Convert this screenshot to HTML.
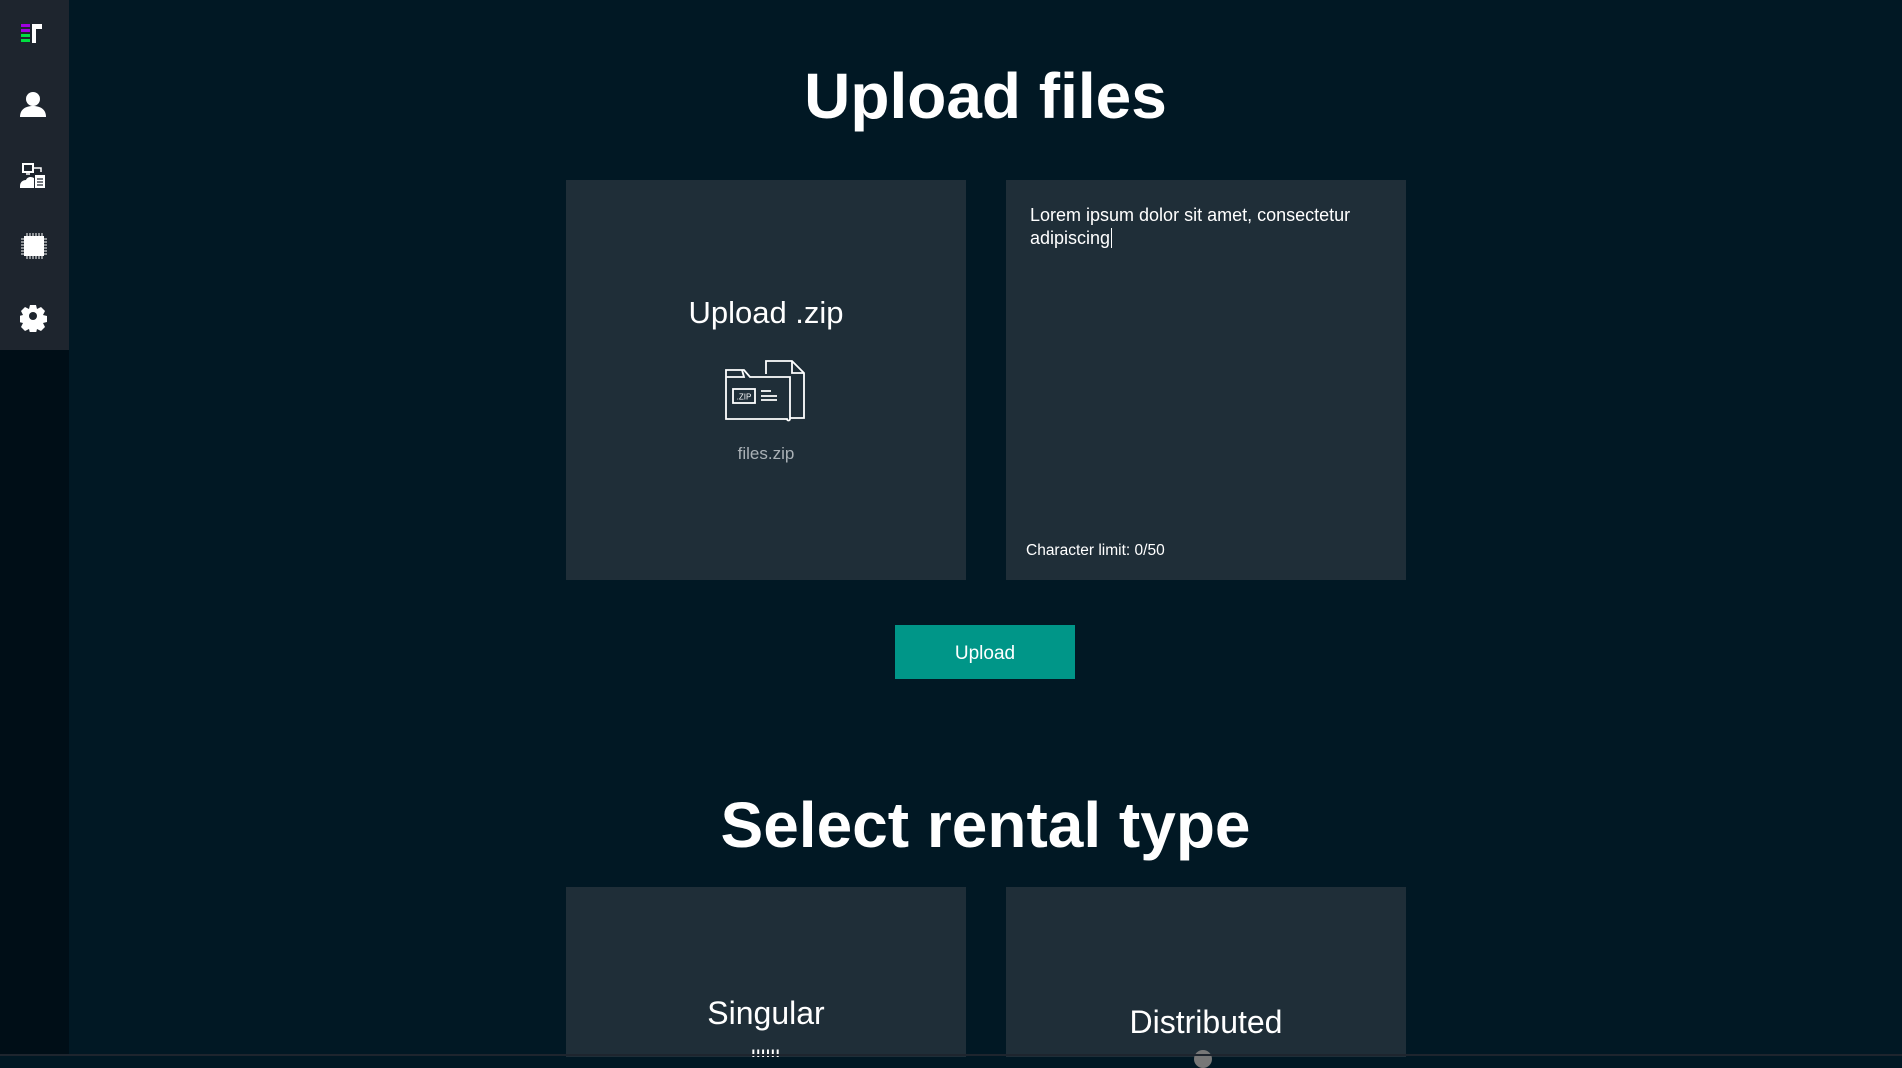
<!DOCTYPE html>
<html><head><meta charset="utf-8"><style>
*{margin:0;padding:0;box-sizing:border-box}
body{width:1902px;height:1056px;overflow:hidden;background:#011824;font-family:"Liberation Sans",Arial,sans-serif;color:#fff;position:relative}
.side{position:absolute;left:0;top:0;width:69px;height:1056px;background:#000e17}
.sidetop{position:absolute;left:0;top:0;width:69px;height:350px;background:#1e252e}
.ic{position:absolute;left:20px;width:30px;height:30px}
h1{position:absolute;left:69px;right:0;text-align:center;font-weight:bold;font-size:64px}
.box{position:absolute;background:#1f2e38}
.t{position:absolute;left:0;right:0;text-align:center}
.btn{position:absolute;left:895px;top:625px;width:180px;height:54px;background:#009688;font-size:19px;text-align:center;line-height:58px}
.bottom{position:absolute;left:0;right:0;top:1054px;height:2px;background:#1e252e}
</style></head><body>
<div class="side"></div><div class="sidetop"></div>
<svg class="ic" style="top:22px" viewBox="0 0 30 30"><rect x="1" y="2" width="9" height="3" fill="#a100e0"/><rect x="1" y="7" width="9" height="3" fill="#a100e0"/><rect x="1" y="12" width="9" height="3" fill="#00e040"/><rect x="1" y="17" width="9" height="3" fill="#00e040"/><path d="M12 2h10v5h-6v14h-4z" fill="#fff"/></svg>
<svg class="ic" style="top:90px" viewBox="0 0 30 30"><circle cx="13" cy="9" r="7" fill="#fff"/><path d="M0 27c0-8 6-11 13-11s13 3 13 11z" fill="#fff"/></svg>
<svg class="ic" style="top:162px" viewBox="0 0 30 30"><rect x="3" y="2" width="10" height="8" fill="none" stroke="#fff" stroke-width="2"/><path d="M6 12h4M13 6h8v4" stroke="#fff" stroke-width="1.5" fill="none"/><path d="M0 24c0-4 3-6 6-6 1-3 5-4 8-2v10H0z" fill="#fff"/><rect x="15" y="13" width="10" height="13" fill="#fff"/><path d="M17 17h6M17 20h6M17 23h6" stroke="#1e252e" stroke-width="1.2"/></svg>
<svg class="ic" style="top:232px" viewBox="0 0 30 30"><rect x="4" y="4" width="20" height="20" fill="#fff"/><path d="M7 1v3M10 1v3M13 1v3M16 1v3M19 1v3M22 1v3M7 24v3M10 24v3M13 24v3M16 24v3M19 24v3M22 24v3M1 7h3M1 10h3M1 13h3M1 16h3M1 19h3M1 22h3M24 7h3M24 10h3M24 13h3M24 16h3M24 19h3M24 22h3" stroke="#fff" stroke-width="1"/></svg>
<svg class="ic" style="top:302px" viewBox="0 0 30 30"><g transform="translate(13 14)"><path d="M-3-11h6l1 4 4-2 4 4-2 4 4 1v6l-4 1 2 4-4 4-4-2-1 4h-6l-1-4-4 2-4-4 2-4-4-1v-6l4-1-2-4 4-4 4 2z" fill="#fff"/><circle r="4" fill="#1e252e"/></g></svg>
<h1 style="top:59px">Upload files</h1>
<div class="box" style="left:566px;top:180px;width:400px;height:400px">
<div class="t" style="top:115px;font-size:31px">Upload .zip</div>
<svg style="position:absolute;left:158px;top:178px" width="84" height="64" viewBox="0 0 84 64" fill="none" stroke="#fff" stroke-width="1.8"><path d="M42 16V3h26l12 12v45H66"/><path d="M68 3v12h12"/><path d="M2 61V12h18l6 7h40v42c0 2 -3 2 -3 0H2z"/><path d="M2 19h18l-2-7"/><rect x="9" y="31" width="22" height="14"/><text x="20" y="41.5" font-size="8" fill="#fff" stroke="none" text-anchor="middle" font-family="Liberation Sans">.ZIP</text><path d="M37 33h10M37 38h16M37 42h16"/></svg>
<div class="t" style="top:264px;font-size:17px;color:#aab1b6">files.zip</div>
</div>
<div class="box" style="left:1006px;top:180px;width:400px;height:400px">
<div style="position:absolute;left:24px;top:24px;font-size:18px;line-height:23px;width:360px">Lorem ipsum dolor sit amet, consectetur adipiscing<span style="border-left:1px solid #fff;margin-left:1px"></span></div>
<div style="position:absolute;left:20px;top:362px;font-size:15.5px">Character limit: 0/50</div>
</div>
<div class="btn">Upload</div>
<h1 style="top:788px">Select rental type</h1>
<div class="box" style="left:566px;top:887px;width:400px;height:170px">
<div class="t" style="top:108px;font-size:32px">Singular</div>
<div class="t" style="top:157px;font-size:14px;letter-spacing:1px;font-weight:bold">ıııııı</div>
</div>
<div class="box" style="left:1006px;top:887px;width:400px;height:170px">
<div class="t" style="top:117px;font-size:32px">Distributed</div>
<div style="position:absolute;left:188px;top:163px;width:18px;height:18px;border-radius:50%;background:#777"></div>
</div>
<div class="bottom"></div>
</body></html>
